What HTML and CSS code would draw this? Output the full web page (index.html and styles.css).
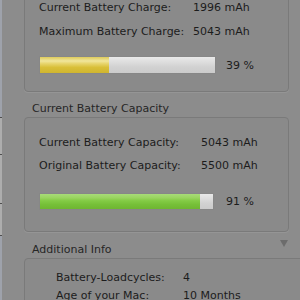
FILE: index.html
```html
<!DOCTYPE html>
<html>

<head>
  <meta name="viewport" content="width=device-width, initial-scale=1.0">
  <title>Battery Info</title>
  <link rel="stylesheet" href="styles.css">
</head>

<body>
  <div class="window">
    <div class="edge edge-left"></div>

    <div class="panel">
      <div class="group group-charge">
        <div class="rows">
          <span class="label">Current Battery Charge:</span>
          <span class="value">1996 mAh</span>
          <span class="label">Maximum Battery Charge:</span>
          <span class="value">5043 mAh</span>
        </div>
        <div class="meter-row">
          <div class="meter">
            <div class="meter-fill fill-yellow" style="width: 39.5%;"></div>
          </div>
          <span class="percent">39 %</span>
        </div>
      </div>

      <div class="section-head">
        <span class="section-title">Current Battery Capacity</span>
      </div>
      <div class="group group-capacity">
        <div class="rows">
          <span class="label">Current Battery Capacity:</span>
          <span class="value">5043 mAh</span>
          <span class="label">Original Battery Capacity:</span>
          <span class="value">5500 mAh</span>
        </div>
        <div class="meter-row">
          <div class="meter">
            <div class="meter-fill fill-green" style="width: 92.5%;"></div>
          </div>
          <span class="percent">91 %</span>
        </div>
      </div>

      <div class="section-head">
        <span class="section-title">Additional Info</span>
        <span class="disclosure"></span>
      </div>
      <div class="group group-info">
        <div class="rows">
          <span class="label">Battery-Loadcycles:</span>
          <span class="value">4</span>
          <span class="label">Age of your Mac:</span>
          <span class="value">10 Months</span>
        </div>
      </div>
    </div>

    <div class="edge edge-right"></div>
  </div>
</body>

</html>
```

FILE: styles.css
```css
html,
body {
  height: 100%;
  margin: 0;
  padding: 0;
  overflow: hidden;
  background-color: #8c8c8c;
}

body {
  font-family: "DejaVu Sans", Verdana, sans-serif;
  font-size: 11px;
  color: #1c1c1c;
}

.window {
  display: flex;
  flex-direction: row;
  height: 300px;
}

.edge {
  flex: none;
  height: 100%;
}

.edge-left {
  width: 2px;
  background: linear-gradient(to bottom,
      #9ea2ab 0, #9ea2ab 117px,
      #4e4e4e 117px, #4e4e4e 118px,
      #adadad 118px, #adadad 154px,
      #4e4e4e 154px, #4e4e4e 155px,
      #adadad 155px, #adadad 203px,
      #4e4e4e 203px, #4e4e4e 204px,
      #adadad 204px, #adadad 235px,
      #4e4e4e 235px, #4e4e4e 236px,
      #9ea2ab 236px);
}

.edge-right {
  width: 3px;
  border-left: 1px solid #7d7d7d;
  background: linear-gradient(to bottom,
      #9aa0ab 0, #9aa0ab 116px,
      #4e4e4e 116px, #4e4e4e 117px,
      #c2c2c2 117px, #c2c2c2 136px,
      #4e4e4e 136px, #4e4e4e 137px,
      #bdbdbd 137px, #bdbdbd 211px,
      #4e4e4e 211px, #4e4e4e 212px,
      #bdbdbd 212px, #bdbdbd 235px,
      #4e4e4e 235px, #4e4e4e 236px,
      #b6b6b6 236px);
}

.panel {
  flex: 1;
  display: flex;
  flex-direction: column;
  padding-left: 22px;
}

.group {
  width: 249px;
  border: 1px solid #7a7a7a;
  border-radius: 4px;
  background-color: #8a8a8a;
  box-shadow: 0 1px 0 #959595;
}

.group-charge {
  margin-top: -20px;
  padding: 15px 0 17px 14px;
}

.group-capacity {
  padding: 13px 0 21px 14px;
}

.group-info {
  padding: 10px 0 20px 31px;
}

.rows {
  display: grid;
  line-height: 23px;
}

.group-charge .rows {
  grid-template-columns: 154px auto;
  line-height: 23.5px;
}

.group-capacity .rows {
  grid-template-columns: 162px auto;
}

.group-info .rows {
  grid-template-columns: 127px auto;
  line-height: 18px;
}

.value {
  white-space: nowrap;
}

.meter-row {
  display: flex;
  align-items: center;
}

.group-charge .meter-row {
  margin-top: 13px;
}

.group-capacity .meter-row {
  margin-top: 16px;
}

.meter {
  height: 18px;
  width: 177px;
  box-sizing: border-box;
  border: 1px solid #878787;
  background: linear-gradient(to bottom, #e9e9e9 0, #dedede 30%, #d2d2d2 60%, #cbcbcb 100%);
  display: flex;
}

.group-capacity .meter {
  height: 17px;
  width: 175px;
}

.meter-fill {
  height: 100%;
}

.fill-yellow {
  background: linear-gradient(to bottom, #ddca5c 0, #f1e69c 25%, #e8d670 40%, #d9bf38 65%, #cfb52f 100%);
}

.fill-green {
  background: linear-gradient(to bottom, #a7db79 0, #9ad560 25%, #83cb45 45%, #76c038 70%, #6fb632 100%);
}

.percent {
  margin-left: 10px;
}

.group-capacity .percent {
  margin-left: 12px;
}

.section-head {
  display: flex;
  width: 264px;
  line-height: 16px;
  margin-top: 9px;
}

.section-head+.group {
  margin-top: 0;
}

.group-capacity+.section-head {
  margin-top: 10px;
}

.section-title {
  padding-left: 8px;
  color: #262626;
}

.disclosure {
  margin-left: auto;
  margin-top: -2px;
  width: 0;
  height: 0;
  border-left: 4px solid transparent;
  border-right: 4px solid transparent;
  border-top: 7px solid #6c6c6c;
}
```
